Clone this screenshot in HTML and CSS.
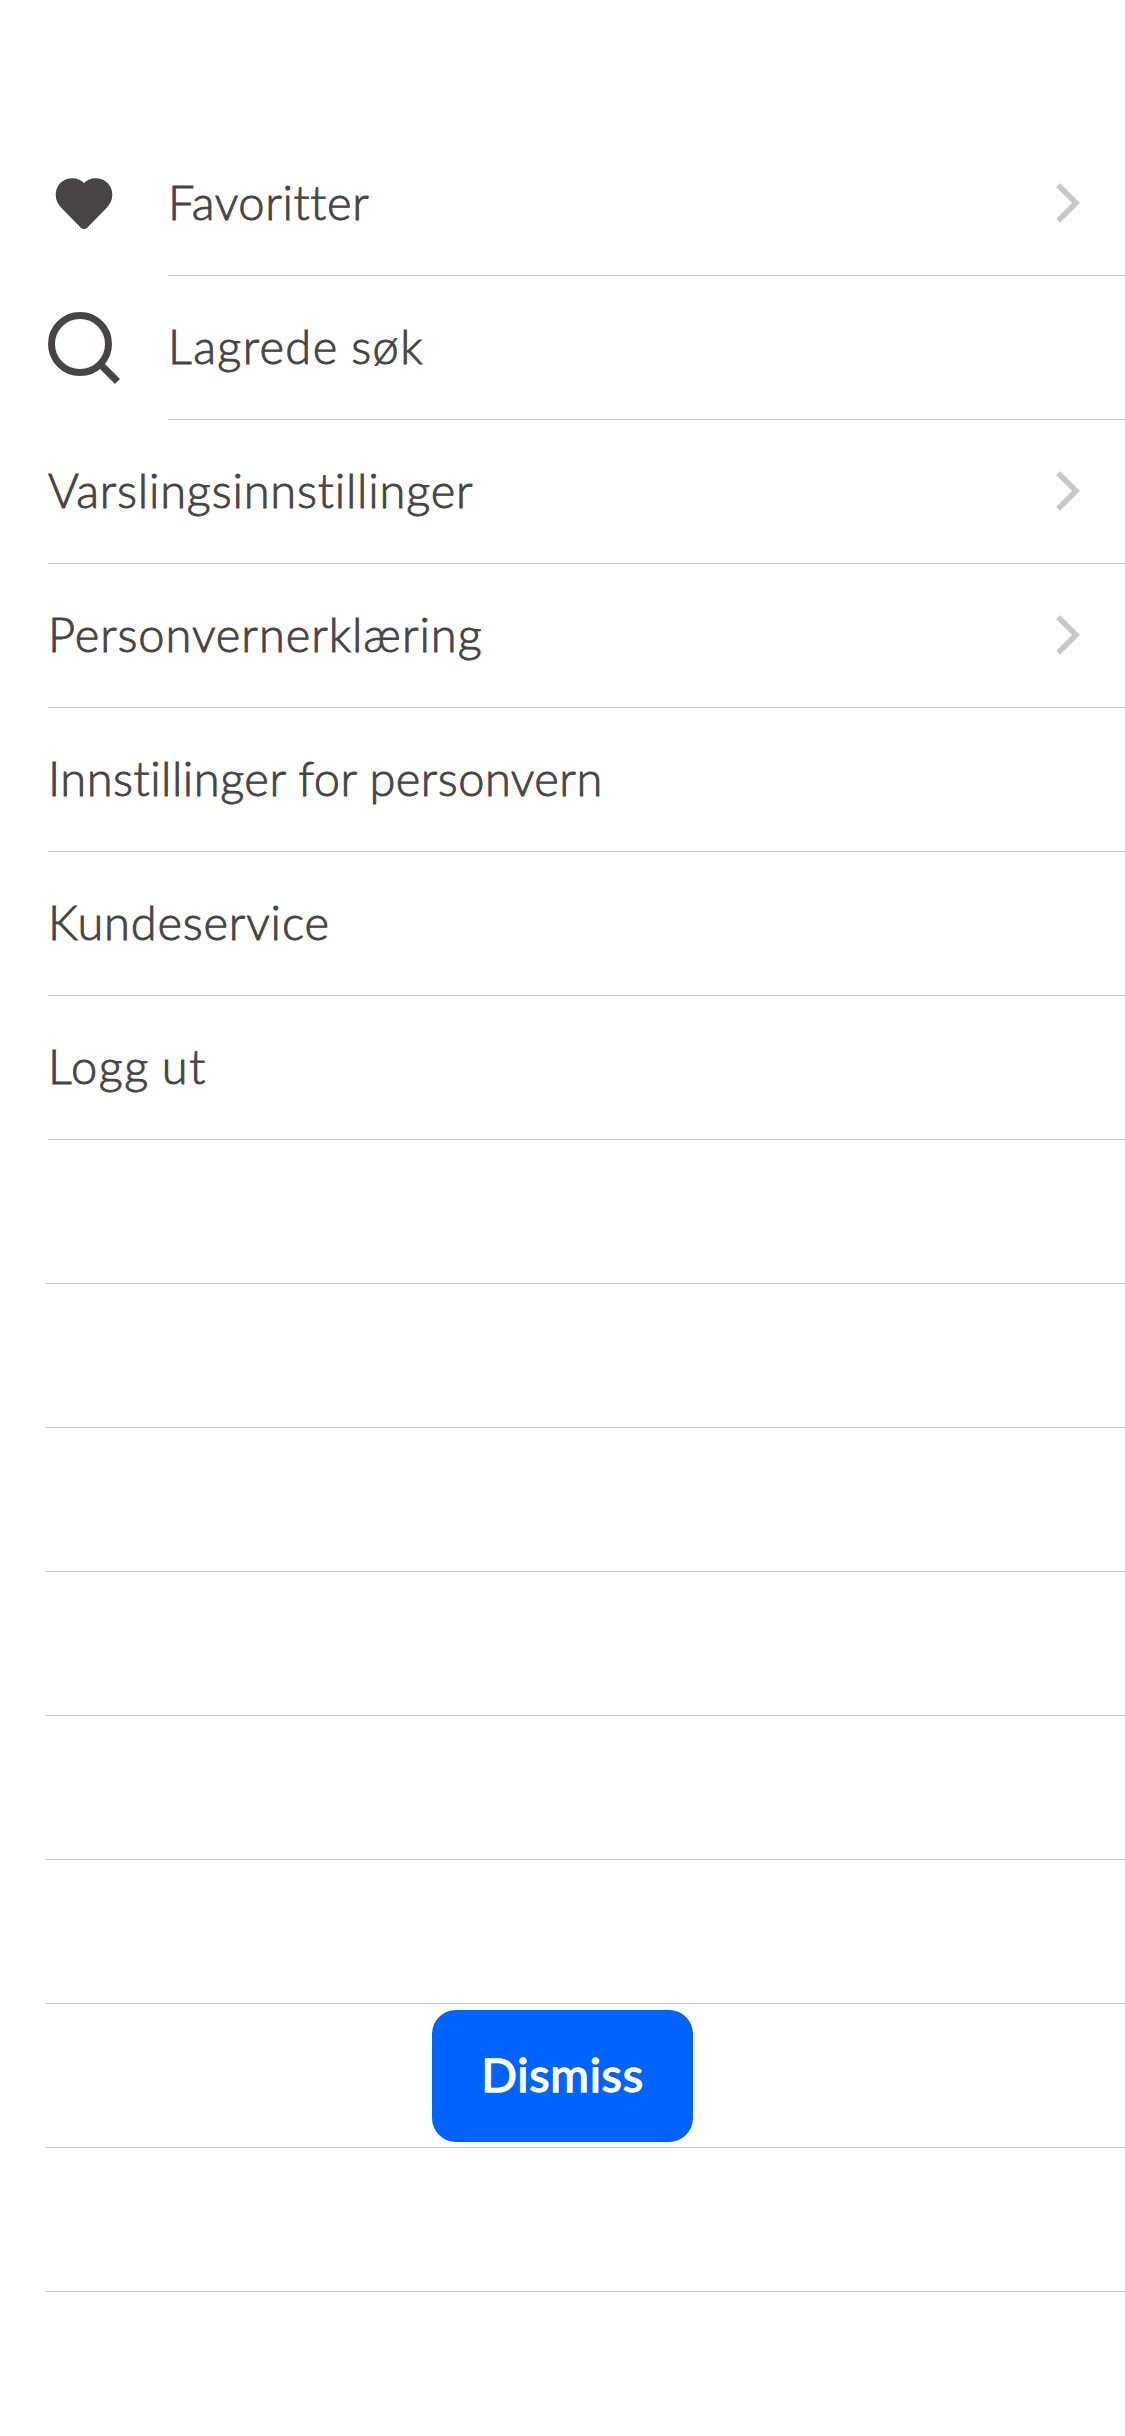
FILE: index.html
```html
<!DOCTYPE html>
<html lang="nb">
<head>
<meta charset="utf-8">
<title>Meny</title>
<link rel="stylesheet" href="styles.css">
</head>
<body>
<main class="screen">
  <ul class="list">
    <li class="row row--icon">
      <svg class="icon" viewBox="0 0 72 72" aria-hidden="true"><path class="icon-fill" d="M36 15C40 10.500 47 9 53 11C60 13.500 64.300 19 64.300 27C64.300 32 62 36.500 58.500 40L39.500 59.500Q36 62.500 32.500 59.500L13.500 40C10 36.500 7.700 32 7.700 27C7.700 19 12 13.500 19 11C25 9 32 10.500 36 15Z"/></svg>
      <div class="content"><span class="label favoritter">Favoritter</span><svg class="chevron" viewBox="0 0 24 40" aria-hidden="true"><path d="M2.200 2.200L20 20L2.200 37.800"/></svg></div>
    </li>
    <li class="row row--icon">
      <svg class="icon" viewBox="0 0 72 72" aria-hidden="true"><circle class="icon-line" cx="32" cy="32" r="28.500"/><path class="icon-line" d="M52.500 52.500L69.500 69.500"/></svg>
      <div class="content"><span class="label lagrede">Lagrede søk</span></div>
    </li>
    <li class="row"><div class="content"><span class="label varsling">Varslingsinnstillinger</span><svg class="chevron" viewBox="0 0 24 40" aria-hidden="true"><path d="M2.200 2.200L20 20L2.200 37.800"/></svg></div></li>
    <li class="row"><div class="content"><span class="label erklaering">Personvernerklæring</span><svg class="chevron" viewBox="0 0 24 40" aria-hidden="true"><path d="M2.200 2.200L20 20L2.200 37.800"/></svg></div></li>
    <li class="row"><div class="content"><span class="label personvern">Innstillinger for personvern</span></div></li>
    <li class="row"><div class="content"><span class="label kundeservice">Kundeservice</span></div></li>
    <li class="row"><div class="content"><span class="label logg-ut">Logg ut</span></div></li>
    <li class="row row--empty"><div class="content"></div></li>
    <li class="row row--empty"><div class="content"></div></li>
    <li class="row row--empty"><div class="content"></div></li>
    <li class="row row--empty"><div class="content"></div></li>
    <li class="row row--empty"><div class="content"></div></li>
    <li class="row row--empty"><div class="content"></div></li>
    <li class="row row--empty"><div class="content"></div></li>
    <li class="row row--empty"><div class="content"></div></li>
  </ul>
  <button class="dismiss" type="button">Dismiss</button>
</main>
</body>
</html>
```
FILE: styles.css
```css
* { box-sizing: border-box; }

body {
  margin: 0;
  background: #fff;
  color: #464445;
  font-family: Lato, "Open Sans", sans-serif;
  font-variant-ligatures: none;
}

.screen {
  position: relative;
  width: 1125px;
  height: 2436px;
  padding-top: 132px;
  overflow: hidden;
}

.list { margin: 0; padding: 0; list-style: none; }

.row { display: flex; height: 144px; padding-left: 48px; }
.row--icon { gap: 48px; align-items: center; }
.row--empty { padding-left: 45px; }

.content {
  display: flex;
  flex: 1;
  align-items: center;
  justify-content: space-between;
  height: 100%;
  padding: 0 45px 2px 0;
  border-bottom: 1px solid #c7c7c9;
}

.label {
  padding-bottom: 2px;
  font-size: 47px;
  font-weight: 300;
  line-height: 60px;
  white-space: nowrap;
  -webkit-text-stroke: 0.9px #464445;
}

.favoritter { letter-spacing: 0.65px; }
.lagrede { letter-spacing: 1.4px; word-spacing: -1.5px; }
.varsling { letter-spacing: 0.8px; }
.erklaering { letter-spacing: 0.95px; }
.personvern { letter-spacing: 0.5px; word-spacing: -0.5px; }
.kundeservice { letter-spacing: 0.8px; }
.logg-ut { letter-spacing: 1.6px; word-spacing: -2.5px; }

.icon { flex: none; width: 72px; height: 72px; }
.icon-fill { fill: #464445; }
.icon-line { fill: none; stroke: #464445; stroke-width: 7; }

.chevron { flex: none; width: 24px; height: 40px; }
.chevron path { fill: none; stroke: #c7c7cc; stroke-width: 5.5; }

/* Floats above the list */
.dismiss {
  position: absolute;
  left: 432px;
  top: 2010px;
  width: 261px;
  height: 132px;
  padding: 0 0 4px;
  border: 0;
  border-radius: 24px;
  background: #0063fb;
  color: #fff;
  font: 400 47px/60px Lato, "Open Sans", sans-serif;
  letter-spacing: 0.7px;
  -webkit-text-stroke: 1.4px #fff;
}
```
